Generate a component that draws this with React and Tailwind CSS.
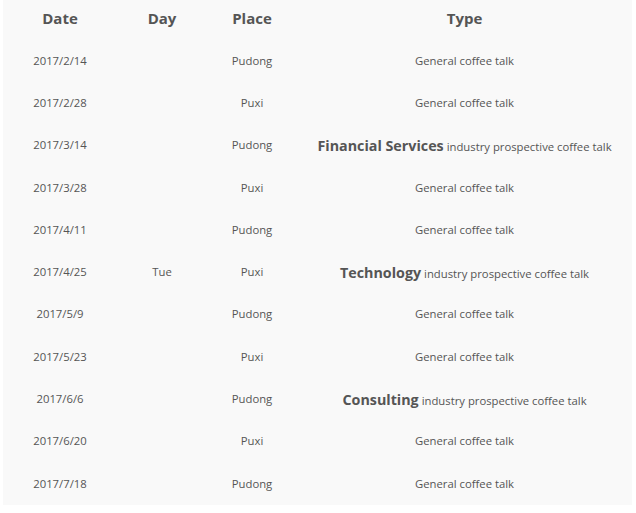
const ROWS = [
  { date: "2017/2/14", day: "", place: "Pudong" },
  { date: "2017/2/28", day: "", place: "Puxi" },
  { date: "2017/3/14", day: "", place: "Pudong", industry: "Financial Services" },
  { date: "2017/3/28", day: "", place: "Puxi" },
  { date: "2017/4/11", day: "", place: "Pudong" },
  { date: "2017/4/25", day: "Tue", place: "Puxi", industry: "Technology" },
  { date: "2017/5/9", day: "", place: "Pudong" },
  { date: "2017/5/23", day: "", place: "Puxi" },
  { date: "2017/6/6", day: "", place: "Pudong", industry: "Consulting" },
  { date: "2017/6/20", day: "", place: "Puxi" },
  { date: "2017/7/18", day: "", place: "Pudong" },
];

export default function App() {
  return (
    <div className="w-[636px] h-[513px] bg-white px-[3px] font-['Open_Sans',sans-serif] text-[#555]">
      <table className="w-[629px] bg-[#f9f9f9] border-collapse table-fixed">
        <colgroup>
          <col className="w-[114px]" />
          <col className="w-[90px]" />
          <col className="w-[90px]" />
          <col />
        </colgroup>
        <thead>
          <tr className="h-[40px] text-[15px] font-bold">
            <th className="text-center align-middle pb-[4px]">Date</th>
            <th className="text-center align-middle pb-[4px]">Day</th>
            <th className="text-center align-middle pb-[4px]">Place</th>
            <th className="text-center align-middle pb-[4px]">Type</th>
          </tr>
        </thead>
        <tbody className="text-[11.3px]">
          {ROWS.map((r) => (
            <tr key={r.date} className="h-[42.3px]">
              <td className="text-center">{r.date}</td>
              <td className="text-center">{r.day}</td>
              <td className="text-center">{r.place}</td>
              <td className="text-center whitespace-nowrap">
                {r.industry ? (
                  <>
                    <span className="text-[14.3px] font-bold">{r.industry}</span>{" "}
                    industry prospective coffee talk
                  </>
                ) : (
                  "General coffee talk"
                )}
              </td>
            </tr>
          ))}
        </tbody>
      </table>
    </div>
  );
}
